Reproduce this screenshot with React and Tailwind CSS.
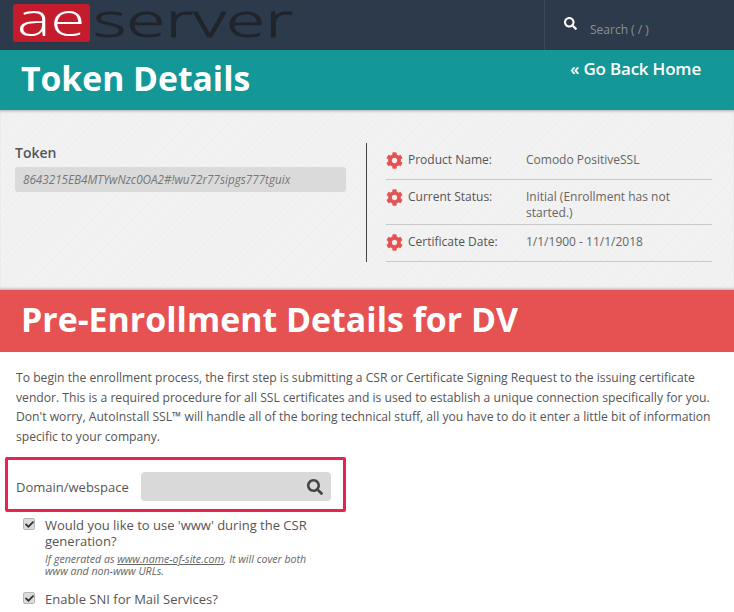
import { FaCog, FaSearch, FaCheck } from "react-icons/fa";

const details = [
  { label: "Product Name:", value: "Comodo PositiveSSL" },
  { label: "Current Status:", value: "Initial (Enrollment has not started.)" },
  { label: "Certificate Date:", value: "1/1/1900 - 11/1/2018" },
];

const Logo = () => (
  <svg width="290" height="44" viewBox="0 0 290 44" className="block overflow-visible" role="img" aria-label="ae server">
    <rect x="0" y="0" width="77" height="38" rx="3" fill="#c41c2c" />
    <text x="4" y="32" fill="#fff" fontFamily="Open Sans" fontWeight="300" fontSize="46" textLength="68" lengthAdjust="spacingAndGlyphs">
      ae
    </text>
    <text x="80" y="33" fill="#20242c" stroke="#20242c" strokeWidth="0.8" fontFamily="Open Sans" fontWeight="300" fontSize="46" textLength="200" lengthAdjust="spacingAndGlyphs">
      server
    </text>
  </svg>
);

const Checkbox = () => (
  <span className="mt-[1px] flex h-[12px] w-[12px] shrink-0 items-center justify-center rounded-[2px] border border-[#b5b5b5] bg-[#dcdcdc] text-[#333]">
    <FaCheck className="text-[9px]" />
  </span>
);

const App = () => {
  return (
    <div className="h-[612px] overflow-hidden bg-white font-['Open_Sans',sans-serif] text-[#555]">
      <div className="flex h-[50px] bg-[#2c3a4b]">
        <div className="flex-1 pl-[13px] pt-[4px]">
          <Logo />
        </div>
        <div className="flex w-[190px] border-l border-[#3a4858] pl-[19px]">
          <FaSearch className="mt-[17px] text-[13px] text-white" />
          <span className="ml-[13px] mt-[21px] text-[12px] leading-[17px] text-[#8c8f94]">Search ( / )</span>
        </div>
      </div>

      <div className="flex h-[60px] items-start justify-between bg-[#149797] pl-[21px] pr-[33px]">
        <h1 className="text-[33.7px] font-bold leading-[56px] text-white">Token Details</h1>
        <a className="pt-[7px] text-[17px] font-semibold leading-[24px] tracking-[-0.2px] text-white">« Go Back Home</a>
      </div>

      <div className="flex h-[180px] bg-[#f1f1f1] bg-[repeating-linear-gradient(135deg,#f2f2f2_0px,#f2f2f2_2px,#f0f0f0_2px,#f0f0f0_4px)] pl-[15px] pt-[33px] shadow-[inset_0_3px_3px_-2px_#aaa,inset_0_-3px_3px_-2px_#aaa]">
        <div className="w-[331px]">
          <label className="block text-[14px] font-semibold leading-[20px] text-[#555]">Token</label>
          <div className="mt-[4px] h-[25px] rounded-[3px] bg-[#dadada] pl-[8px] text-[11.7px] italic leading-[25px] text-[#777]">
            8643215EB4MTYwNzc0OA2#!wu72r77sipgs777tguix
          </div>
        </div>
        <div className="ml-[20px] h-[119px] w-[346px] border-l border-[#444] pl-[19px]">
          {details.map((row) => (
            <div key={row.label} className="flex min-h-[37px] border-b border-[#c8c8c8] pb-[3px] pt-[9px] text-[12px] leading-[16px]">
              <FaCog className="mr-[5px] shrink-0 text-[17px] text-[#e65252]" />
              <span className="w-[118px] shrink-0 font-medium text-[#555]">{row.label}</span>
              <span className="text-[#666]">{row.value}</span>
            </div>
          ))}
        </div>
      </div>

      <div className="h-[62px] bg-[#e65252] pl-[21px]">
        <h2 className="text-[33.9px] font-bold leading-[58px] text-white">Pre-Enrollment Details for DV</h2>
      </div>

      <div className="px-[15px] pt-[16px]">
        <p className="ml-[1px] w-[700px] text-[12.15px] leading-[19.5px] text-[#555]">
          To begin the enrollment process, the first step is submitting a CSR or Certificate Signing Request to the issuing certificate vendor. This is a required procedure for all SSL certificates and is used to establish a unique connection specifically for you. Don't worry, AutoInstall SSL™ will handle all of the boring technical stuff, all you have to do it enter a little bit of information specific to your company.
        </p>

        <div className="-ml-[10px] mt-[11px] flex h-[55px] w-[341px] items-start rounded-[2px] border-[3px] border-[#e8234f] pl-[8px] pr-[12px] pt-[12px]">
          <span className="w-[125px] text-[13px] leading-[31px] text-[#555]">Domain/webspace</span>
          <div className="flex h-[29px] flex-1 items-center justify-end rounded-[4px] bg-[#d9d9d9] pr-[8px]">
            <FaSearch className="text-[16px] text-[#444]" />
          </div>
        </div>

        <div className="ml-[8px] mt-[5px] flex gap-[10px]">
          <Checkbox />
          <div className="w-[265px]">
            <p className="text-[13px] leading-[16px] text-[#555]">Would you like to use 'www' during the CSR generation?</p>
            <p className="mt-[4px] text-[10.6px] italic leading-[12px] text-[#666]">
              If generated as <span className="underline">www.name-of-site.com</span>, It will cover both www and non-www URLs.
            </p>
          </div>
        </div>

        <div className="ml-[8px] mt-[14px] flex gap-[10px]">
          <Checkbox />
          <p className="text-[13px] leading-[16px] text-[#555]">Enable SNI for Mail Services?</p>
        </div>
      </div>
    </div>
  );
};

export default App;
